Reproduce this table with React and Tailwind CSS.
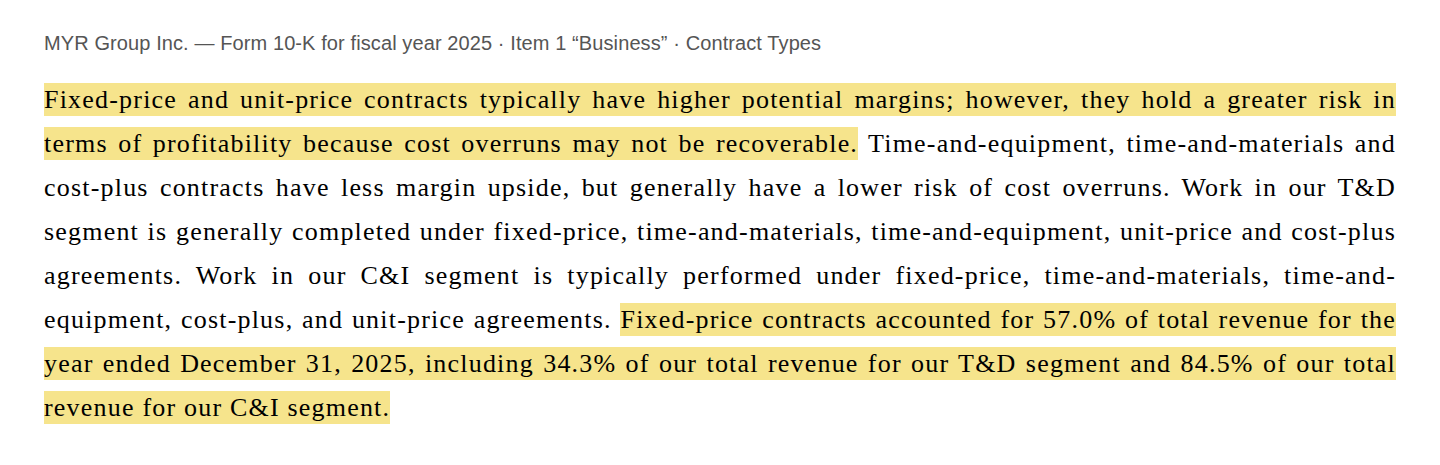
import React from 'react';

const Mark = ({ children }) => (
  <span className="bg-[#f6e48c] py-[2px] [box-decoration-break:clone]">{children}</span>
);

export default function App() {
  return (
    <div className="bg-white min-h-[465px] px-[44px] pt-[31px]">
      <div className="text-[20px] leading-[24px] tracking-[0.1px] text-[#555555] font-['Liberation_Sans',Arial,sans-serif]">
        MYR Group Inc. — Form 10-K for fiscal year 2025 · Item 1 “Business” · Contract Types
      </div>
      <p className="mt-[23px] text-[26px] leading-[44px] tracking-[1.2px] text-black text-justify font-['Liberation_Serif','DejaVu_Serif',serif]">
        <Mark>
          Fixed-price and unit-price contracts typically have higher potential margins; however, they hold a greater risk in terms of profitability because cost overruns may not be recoverable.
        </Mark>{' '}
        Time-and-equipment, time-and-materials and cost-plus contracts have less margin upside, but generally have a lower risk of cost overruns. Work in our T&amp;D segment is generally completed under fixed-price, time-and-materials, time-and-equipment, unit-price and cost-plus agreements. Work in our C&amp;I segment is typically performed under fixed-price, time-and-materials, time-and-equipment, cost-plus, and unit-price agreements.{' '}
        <Mark>
          Fixed-price contracts accounted for 57.0% of total revenue for the year ended December 31, 2025, including 34.3% of our total revenue for our T&amp;D segment and 84.5% of our total revenue for our C&amp;I segment.
        </Mark>
      </p>
    </div>
  );
}
